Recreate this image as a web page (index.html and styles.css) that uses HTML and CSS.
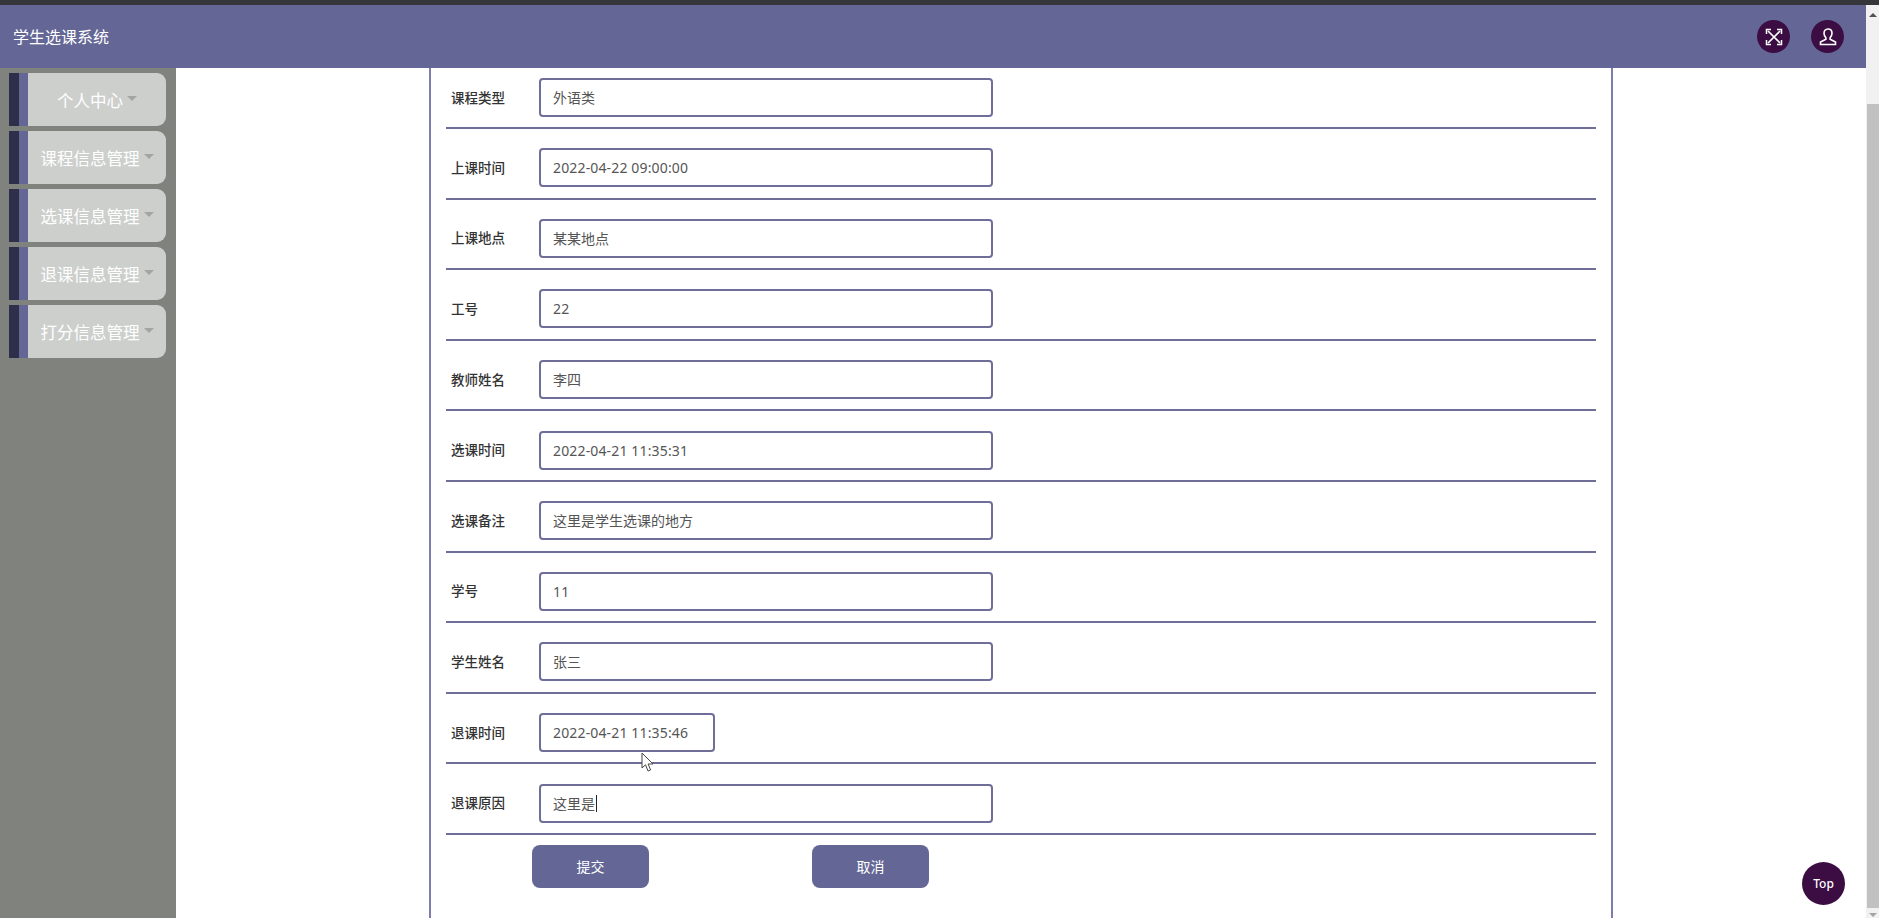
FILE: index.html
```html
<!DOCTYPE html>
<html lang="zh-CN">
<head>
    <meta charset="UTF-8">
    <title>学生选课系统</title>
    <link rel="stylesheet" href="styles.css">
</head>
<body>
    <div class="page">
        <header class="topbar">
            <div class="brand">学生选课系统</div>
            <div class="tools">
                <span class="round-btn">
                    <svg width="20" height="20" viewBox="0 0 20 20" fill="none" stroke="#fff" stroke-width="1.700">
                        <path d="M4 4l12 12M16 4L4 16"/>
                        <path d="M2.500 7V2.500H7M13 2.500H17.500V7M2.500 13V17.500H7M13 17.500H17.500V13" stroke-width="1.500"/>
                    </svg>
                </span>
                <span class="round-btn">
                    <svg width="20" height="20" viewBox="0 0 20 20" fill="none" stroke="#fff" stroke-width="1.600">
                        <path d="M10 2c-2.600 0-4 1.900-4 4.200 0 2 .9 3.500 1.900 4.500v1.500L2.500 15v2.500h15V15l-5.400-2.800v-1.500c1-1 1.900-2.500 1.900-4.500C14 3.900 12.600 2 10 2z"/>
                    </svg>
                </span>
            </div>
        </header>
        <div class="layout">
            <nav class="sidebar">
                <a class="menu-item"><span class="menu-label">个人中心<i class="arrow"></i></span></a>
                <a class="menu-item"><span class="menu-label">课程信息管理<i class="arrow"></i></span></a>
                <a class="menu-item"><span class="menu-label">选课信息管理<i class="arrow"></i></span></a>
                <a class="menu-item"><span class="menu-label">退课信息管理<i class="arrow"></i></span></a>
                <a class="menu-item"><span class="menu-label">打分信息管理<i class="arrow"></i></span></a>
            </nav>
            <main class="content">
                <form class="card">
                    <div class="form-row"><label>课程类型</label><div class="field">外语类</div></div>
                    <div class="form-row"><label>上课时间</label><div class="field num">2022-04-22 09:00:00</div></div>
                    <div class="form-row"><label>上课地点</label><div class="field">某某地点</div></div>
                    <div class="form-row"><label>工号</label><div class="field num">22</div></div>
                    <div class="form-row"><label>教师姓名</label><div class="field">李四</div></div>
                    <div class="form-row"><label>选课时间</label><div class="field num">2022-04-21 11:35:31</div></div>
                    <div class="form-row"><label>选课备注</label><div class="field">这里是学生选课的地方</div></div>
                    <div class="form-row"><label>学号</label><div class="field num">11</div></div>
                    <div class="form-row"><label>学生姓名</label><div class="field">张三</div></div>
                    <div class="form-row"><label>退课时间</label><div class="field field-date num">2022-04-21 11:35:46</div></div>
                    <div class="form-row"><label>退课原因</label><div class="field">这里是<span class="caret"></span></div></div>
                    <div class="actions">
                        <button type="button" class="btn">提交</button>
                        <button type="button" class="btn">取消</button>
                    </div>
                </form>
            </main>
        </div>
    </div>
    <div class="scrollbar">
        <span class="scroll-up"></span>
        <span class="scroll-thumb"></span>
        <span class="scroll-down"></span>
    </div>
    <a class="to-top">Top</a>
    <svg class="pointer" width="14" height="21" viewBox="0 0 14 21">
        <path d="M1 1v15l3.500-3.200L7 19l2.600-1.100-2.500-5.900H12z" fill="#fff" stroke="#444" stroke-width="1"/>
    </svg>
</body>
</html>
```

FILE: styles.css
```css
html, body {
    margin: 0;
    padding: 0;
    height: 100%;
    overflow: hidden;
}
body {
    display: flex;
    box-sizing: border-box;
    border-top: 5px solid #35363a;
    font-family: "Noto Sans", "Noto Sans CJK SC", sans-serif;
    background-color: #fff;
}
.page {
    flex: 1;
    display: flex;
    flex-direction: column;
    min-width: 0;
}
.topbar {
    flex: none;
    height: 63px;
    display: flex;
    justify-content: space-between;
    align-items: center;
    background-color: #646796;
    color: #fff;
}
.brand {
    margin: -1px 0 0 13px;
    font-size: 16px;
}
.tools {
    display: flex;
    gap: 21px;
    margin-right: 22px;
}
.round-btn {
    width: 33px;
    height: 33px;
    border-radius: 50%;
    background-color: #3b0d43;
    display: flex;
    align-items: center;
    justify-content: center;
}
.layout {
    flex: 1;
    display: flex;
    min-height: 0;
}
.sidebar {
    flex: none;
    width: 176px;
    box-sizing: border-box;
    padding: 5px 10px 0 9px;
    background-color: #80827e;
    display: flex;
    flex-direction: column;
    gap: 5px;
}
.menu-item {
    height: 53px;
    display: flex;
    align-items: center;
    justify-content: center;
    box-sizing: border-box;
    padding-left: 9px;
    border-left: 10px solid #2e2f4a;
    border-radius: 0 9px 9px 0;
    background: linear-gradient(to right, #646796 9px, #cdcfcd 9px);
    color: #fff;
    font-size: 16.500px;
}
.menu-label {
    display: flex;
    align-items: center;
}
.arrow {
    width: 0;
    height: 0;
    margin: -3px 0 0 4px;
    border-left: 5px solid transparent;
    border-right: 5px solid transparent;
    border-top: 5px solid #a3a4a3;
}
.content {
    flex: 1;
    min-width: 0;
    overflow: hidden;
}
.card {
    width: 1184px;
    min-height: 100%;
    margin-left: 253px;
    box-sizing: border-box;
    padding: 0 15px;
    border-left: 2px solid #7f7eaa;
    border-right: 2px solid #7f7eaa;
}
.form-row {
    display: flex;
    align-items: center;
    height: 70.600px;
    box-sizing: border-box;
    padding: 9px 0 0;
    border-bottom: 2px solid #6f6e98;
}
.form-row:first-child {
    height: 61px;
    padding-top: 0;
}
.form-row label {
    width: 93px;
    margin-bottom: 2px;
    box-sizing: border-box;
    padding-left: 5px;
    font-size: 13.500px;
    font-weight: 500;
    color: #333;
}
.form-row:first-child label {
    margin-bottom: 1px;
}
.field {
    width: 454px;
    height: 39px;
    box-sizing: border-box;
    padding: 0 12px;
    line-height: 35px;
    border: 2px solid #6f6e98;
    border-radius: 4px;
    font-size: 14px;
    color: #555;
}
.field-date {
    width: 176px;
}
.num {
    letter-spacing: .15px;
}
.caret {
    display: inline-block;
    width: 1px;
    height: 17px;
    margin-left: 1px;
    vertical-align: -3px;
    background-color: #222;
}
.actions {
    display: flex;
    gap: 163px;
    padding: 10px 0 0 86px;
}
.btn {
    width: 117px;
    height: 43px;
    border: 0;
    border-radius: 8px;
    background-color: #646796;
    color: #fff;
    font-family: inherit;
    font-size: 14px;
}
.scrollbar {
    flex: none;
    width: 13px;
    display: flex;
    flex-direction: column;
    align-items: flex-end;
    background-color: #f1f1f1;
}
.scroll-up, .scroll-down {
    width: 0;
    height: 0;
    border-left: 4px solid transparent;
    border-right: 4px solid transparent;
    margin-right: 2px;
}
.scroll-up {
    margin-top: 8px;
    border-bottom: 4px solid #505050;
}
.scroll-thumb {
    width: 12px;
    height: 804px;
    margin-top: 87px;
    background-color: #c1c1c1;
}
.scroll-down {
    margin-top: 5px;
    border-top: 4px solid #a3a3a3;
}
.to-top {
    position: fixed;
    left: 1802px;
    top: 862px;
    width: 43px;
    height: 43px;
    border-radius: 50%;
    background-color: #3b0d43;
    color: #fff;
    font-size: 12px;
    font-weight: 500;
    line-height: 44px;
    text-align: center;
}
.pointer {
    position: fixed;
    left: 641px;
    top: 752px;
}
```
